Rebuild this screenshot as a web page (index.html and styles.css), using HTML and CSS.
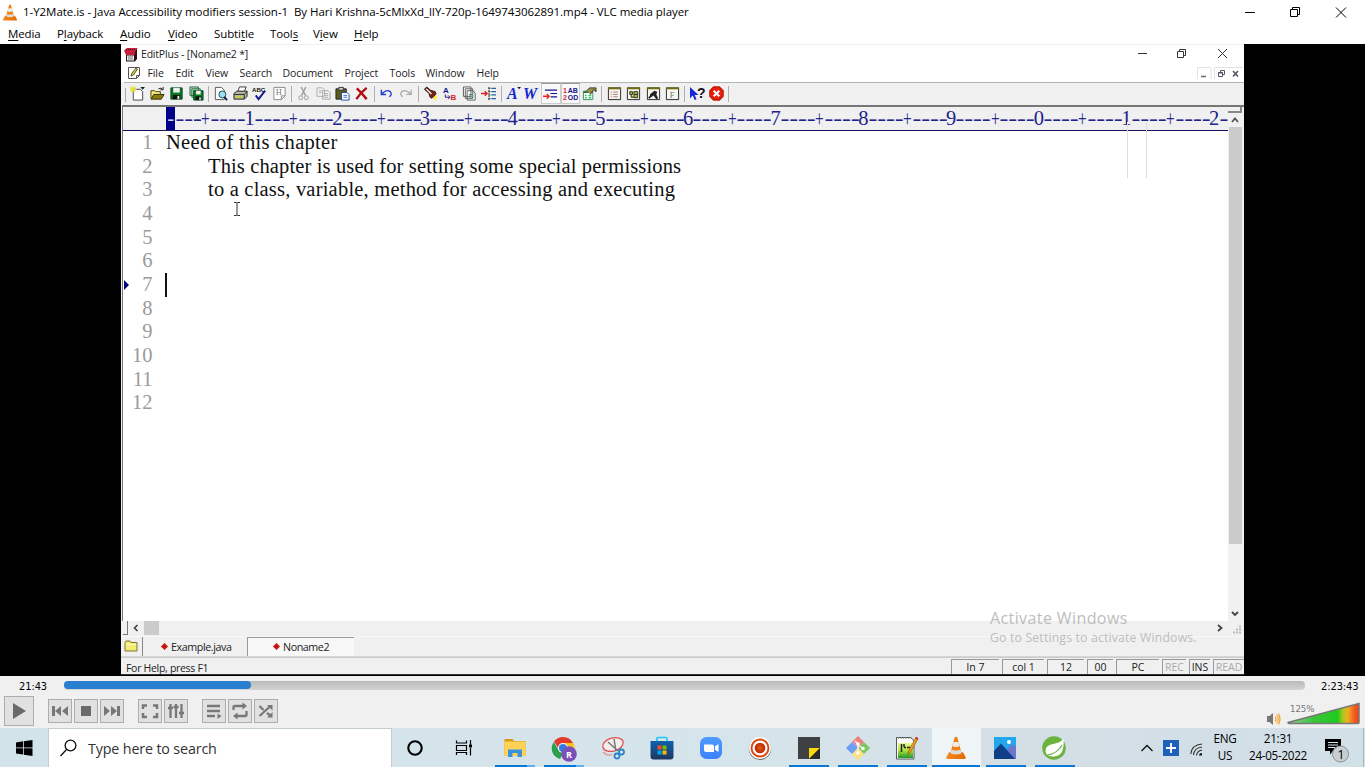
FILE: index.html
```html
<!DOCTYPE html>
<html lang="en">
<head>
<meta charset="utf-8">
<title>VLC media player</title>
<link rel="stylesheet" href="styles.css">
</head>
<body>
<svg class="defs" width="0" height="0">
  <defs>
    <linearGradient id="coneG" x1="0" x2="1"><stop offset="0" stop-color="#f58a1c"/><stop offset="1" stop-color="#e06a00"/></linearGradient>
    <linearGradient id="volG" x1="0" x2="1"><stop offset="0" stop-color="#8fcf8f"/><stop offset=".35" stop-color="#3cc63c"/><stop offset=".7" stop-color="#1ecb1e"/><stop offset=".77" stop-color="#a8c81e"/><stop offset=".84" stop-color="#f0b020"/><stop offset=".93" stop-color="#f06020"/><stop offset="1" stop-color="#f03c1c"/></linearGradient>
    <linearGradient id="bagG" x1="0" y1="0" x2="0" y2="1"><stop offset="0" stop-color="#0d62ae"/><stop offset="1" stop-color="#20365f"/></linearGradient>
    <linearGradient id="zoomG" x1="0" y1="0" x2="0" y2="1"><stop offset="0" stop-color="#4f9bff"/><stop offset="1" stop-color="#3b82fb"/></linearGradient>
    <linearGradient id="npG" x1="0" y1="0" x2="0" y2="1"><stop offset="0" stop-color="#e9f59a"/><stop offset=".5" stop-color="#a8e23c"/><stop offset="1" stop-color="#1f9a2c"/></linearGradient>
    <radialGradient id="recG"><stop offset="0" stop-color="#e85a10"/><stop offset="1" stop-color="#b8260a"/></radialGradient>
    <symbol id="cone" viewBox="0 0 20 24">
      <path d="M3 16.500h14l2.800 5q.5 2-1.200 2H1.400Q-.3 23.500.2 21.500z" fill="url(#coneG)"/>
      <path d="M8.700 1.200Q10 .2 11.300 1.200L16 18.500Q10 21.500 4 18.500z" fill="#f08010"/>
      <path d="M7.600 6h4.900l1.300 4.500q-3.800 1.300-7.500 0z" fill="#ededed"/>
      <path d="M5.300 14q4.700 1.600 9.400 0l1 3.500q-5.700 2.400-11.400 0z" fill="#dcdcdc"/>
    </symbol>
  </defs>
</svg>
<div class="desktop">
  <header class="vlc-title">
    <svg class="vlc-logo" width="14" height="17"><use href="#cone"/></svg>
    <span class="vlc-name">1-Y2Mate.is - Java Accessibility modifiers session-1&nbsp; By Hari Krishna-5cMlxXd_lIY-720p-1649743062891.mp4 - VLC media player</span>
    <svg class="win-btns" width="110" height="20" viewBox="0 0 110 20" fill="none" stroke="#000">
      <path d="M0 10.500h10M45.500 7.500h7v7h-7zM47.500 7v-1.500h7v7h-1.500"/><path d="M91 5.500l10 10M101 5.500l-10 10"/>
    </svg>
  </header>
  <nav class="vlc-menu">
    <span><u>M</u>edia</span><span>P<u>l</u>ayback</span><span><u>A</u>udio</span><span><u>V</u>ideo</span><span>Subti<u>t</u>le</span><span>Tool<u>s</u></span><span>V<u>i</u>ew</span><span><u>H</u>elp</span>
  </nav>

  <main class="video">
    <section class="ep">
      <div class="ep-title">
        <svg width="14" height="15" viewBox="0 0 14 15"><path d="M2 3l2-2h9v11l-2 2.500H2z" fill="#2b1014"/><path d="M0 3.500L3 1h10.500l-2 3-1 4H2z" fill="#c8203c"/><path d="M3 8.500h7v5H3z" fill="#eee"/><path d="M4 10h5M4 12h5" stroke="#777"/><path d="M2 2.500h9" stroke="#4a0c18" stroke-dasharray="1 1"/></svg>
        <span>EditPlus - [Noname2 *]</span>
        <svg class="ep-btns" width="90" height="14" viewBox="0 0 90 14" fill="none" stroke="#333"><path d="M0 6.500h9M39.500 4.500h6v6h-6zM41.500 4V2.500h6v6h-1.500M80 2l9 9M89 2l-9 9"/></svg>
      </div>
      <div class="ep-menu">
        <svg width="14" height="14" viewBox="0 0 14 14"><path d="M1.500 1.500h11v8l-3 3h-8z" fill="#fff" stroke="#555"/><path d="M9.500 12.500v-3h3" fill="none" stroke="#555"/><path d="M4 10l1-3 4-5 1.500 1-4 6z" fill="#d8d020" stroke="#333" stroke-width=".8"/></svg>
        <span>File</span><span>Edit</span><span>View</span><span>Search</span><span>Document</span><span>Project</span><span>Tools</span><span>Window</span><span>Help</span>
        <svg class="mdi-btns" width="46" height="14" viewBox="0 0 46 14" fill="none"><path d="M.5 13V1.500H14V13M17.500 13V1.500H46" stroke="#e2e2e2"/><path d="M4 10.500h5" stroke="#667" stroke-width="1.500"/><path d="M21.500 6.500h4v4h-4zM23.500 6V4.500h4v4H26M21 7h5" stroke="#556"/><path d="M36 5l5 5.500M41 5l-5 5.500" stroke="#556" stroke-width="1.600"/></svg>
      </div>
      <div class="ep-tools">
        <span class="tool"><svg viewBox="0 0 16 16"><path d="M3.500 3.500H11l2.500 2.500v9h-10z" fill="#fff" stroke="#444"/><path d="M0 1l6 5M6 1L0 6M3 0v7M0 3.500h7" stroke="#e8e030" stroke-width="1.200"/><path d="M11 1h5l-2.500 3z" fill="#123"/></svg></span>
        <span class="tool"><svg viewBox="0 0 16 16"><path d="M1 13V5h4l1 1h5v3" fill="#f3e97a" stroke="#443c00"/><path d="M1 14l3-5h11l-3 5z" fill="#8a7b10" stroke="#332c00"/><path d="M9 3q3-2 5 1M14 1v3h-3" fill="none" stroke="#222"/></svg></span>
        <span class="tool"><svg viewBox="0 0 16 16"><path d="M2 2h12v12H2z" fill="#087a1c" stroke="#042"/><path d="M4.500 2h7v5h-7z" fill="#eee"/><path d="M4 9.500h8V14H4z" fill="#111"/><path d="M9 10.500h2V14H9z" fill="#eee"/></svg></span>
        <span class="tool"><svg viewBox="0 0 16 16"><path d="M1 1h9v9H1zM3 3h9v9H3z" fill="#bdb" stroke="#264"/><path d="M5 5h10v10H5z" fill="#087a1c" stroke="#042"/><path d="M7.500 5h5v4h-5z" fill="#eee"/><path d="M7 11h6v4H7z" fill="#111"/><path d="M11 12h1.500v3H11z" fill="#eee"/></svg></span>
        <i class="sep"></i>
        <span class="tool"><svg viewBox="0 0 16 16"><path d="M2.500 1.500H9l3 3v10H2.500z" fill="#fff" stroke="#555"/><circle cx="10" cy="9" r="3.700" fill="#9ae0ee" stroke="#245"/><path d="M12 11.500l3 3.500" stroke="#124" stroke-width="2"/></svg></span>
        <span class="tool"><svg viewBox="0 0 16 16"><path d="M5 6l2-5h7l-2 5z" fill="#fff" stroke="#333"/><path d="M1 8l3-2.500h11V11l-3 3H1z" fill="#b9b9a0" stroke="#222"/><path d="M1 9h11l3-3M12 9v5" fill="none" stroke="#222"/><path d="M3 11.500h7" stroke="#c9d820" stroke-width="1.500"/></svg></span>
        <span class="tool"><svg viewBox="0 0 16 16"><text x="0" y="6" class="abc">ABC</text><path d="M4 10l3 4 7-9" fill="none" stroke="#14148c" stroke-width="2"/></svg></span>
        <span class="tool"><svg viewBox="0 0 16 16"><path d="M2 1.500h12v9l-4 4H2z" fill="#fff" stroke="#888"/><path d="M10 14.500v-4h4" fill="none" stroke="#888"/><text x="4" y="9.500" class="hglyph">H</text></svg></span>
        <i class="sep"></i>
        <span class="tool"><svg viewBox="0 0 16 16" fill="none" stroke="#999"><path d="M5.500 1L10 10M10.500 1L6 10" stroke-width="1.400"/><circle cx="5" cy="12.500" r="2.100"/><circle cx="11" cy="12.500" r="2.100"/></svg></span>
        <span class="tool"><svg viewBox="0 0 16 16" fill="#f4f4f4" stroke="#aaa"><path d="M1 2h6l2 2v7H1zM7 5h6l2 2v7H7z"/><path d="M3 5h3M3 7h3M9 8h4M9 10h4M9 12h4"/></svg></span>
        <span class="tool"><svg viewBox="0 0 16 16"><path d="M1 3h11v11H1z" fill="#5c5a1c" stroke="#222"/><path d="M4 1.500h5v3H4z" fill="#ccc" stroke="#333"/><path d="M7 7h6l2 2v6H7z" fill="#fff" stroke="#114a9c"/><path d="M9 10h4M9 12h4" stroke="#36c"/></svg></span>
        <span class="tool"><svg viewBox="0 0 16 16"><path d="M3 2.500Q8 7 13.500 14M13.500 2Q7 7 2.500 14" fill="none" stroke="#b00c14" stroke-width="2.600"/></svg></span>
        <i class="sep"></i>
        <span class="tool"><svg viewBox="0 0 16 16" fill="none" stroke="#2440d0" stroke-width="1.500"><path d="M2.500 4v5h5M3 8.500Q8 3 12 6q2.500 3-1 5.500"/></svg></span>
        <span class="tool"><svg viewBox="0 0 16 16" fill="none" stroke="#aaa" stroke-width="1.400"><path d="M14 4v5H9M13.500 8.500Q8 3 4 6q-2.500 3 1 5.500"/></svg></span>
        <i class="sep"></i>
        <span class="tool"><svg viewBox="0 0 16 16"><path d="M9 10l7 0-3 6z" fill="#ffe84a"/><path d="M1.500 3.500L4 1l4 3.500 5 1.500 1 2.500-4.500 4.500-2-1-1-4z" fill="#7e2018" stroke="#222"/><path d="M3.500 3l5.500 5.500" stroke="#fff" stroke-width="1.300"/></svg></span>
        <span class="tool"><svg viewBox="0 0 16 16"><text x="1" y="7.500" class="ltr blue">A</text><text x="9" y="15" class="ltr red">B</text><path d="M3.500 9v3H8M6.500 10l2 2-2 2" fill="none" stroke="#14148c"/></svg></span>
        <span class="tool"><svg viewBox="0 0 16 16" fill="#fff" stroke="#555"><path d="M1.500 1h8v10h-8zM3.500 3h8v10h-8zM5.500 5h6l2.500 2.500V15H5.500z"/><path d="M7.500 9h4M7.500 11h4M7.500 13h4" stroke="#486"/></svg></span>
        <span class="tool"><svg viewBox="0 0 16 16" fill="none"><path d="M0 8h6M4 5.500L6.500 8 4 10.500" stroke="#d22" stroke-width="1.500"/><path d="M8.500 1v14M8 2.500h2M8 6h2M8 9.500h2M8 13.500h2" stroke="#222" stroke-dasharray="2 1"/><path d="M11 2.500h5M11 6h5M11 9.500h5M11 13.500h5" stroke="#26a" stroke-width="1.300"/></svg></span>
        <i class="sep"></i>
        <span class="tool narrow"><svg viewBox="0 0 16 16"><text x="1" y="14" class="bigltr">A</text><path d="M12 1h4l-2 2.500z" fill="#114"/></svg></span>
        <span class="tool narrow"><svg viewBox="0 0 16 16"><text x="-1" y="14" class="bigltr">W</text></svg></span>
        <span class="tool on"><svg viewBox="0 0 16 16" fill="none"><path d="M2 4.500h13M8 8h7M8 11.500h7" stroke="#14148c" stroke-width="1.300"/><path d="M0 11h6M4 8.500L6.500 11 4 13.500" stroke="#e22" stroke-width="1.500"/></svg></span>
        <span class="tool on"><svg viewBox="0 0 16 16"><text x="0" y="7.500" class="tiny red">1</text><text x="5" y="7.500" class="tiny blue">AB</text><text x="0" y="15" class="tiny red">2</text><text x="5" y="15" class="tiny blue">OD</text></svg></span>
        <span class="tool"><svg viewBox="0 0 16 16"><path d="M1.500 5.500h10v9h-10z" fill="#fff" stroke="#486"/><path d="M1.500 5.500h10v2h-10z" fill="#365"/><path d="M3 10h2M7 10h3M3 12.500h2M7 12.500h3" stroke="#2c6" stroke-width="1.600"/><path d="M5 5l3-3h7v4l-3-2-3 5" fill="#999340" stroke="#333"/></svg></span>
        <i class="sep"></i>
        <span class="tool"><svg viewBox="0 0 16 16"><path d="M1.500 2h13v12.500h-13z" fill="#f6f6ee" stroke="#222"/><path d="M1 2.500h14" stroke="#706c10" stroke-width="2"/><path d="M4 6.500h1M4 9h1M4 11.500h1" stroke="#d33"/><path d="M6.500 6.500h5M6.500 9h5M6.500 11.500h5" stroke="#a77"/></svg></span>
        <span class="tool"><svg viewBox="0 0 16 16"><path d="M1.500 2h13v12.500h-13z" fill="#f6f6ee" stroke="#222"/><path d="M1 2.500h14" stroke="#706c10" stroke-width="2"/><path d="M4 6h3v3H4zM8.500 6h4v6.500h-4zM8.500 9h4M5.500 9v3h3" fill="#bcb830" stroke="#232"/></svg></span>
        <span class="tool"><svg viewBox="0 0 16 16"><path d="M1.500 2h13v12.500h-13z" fill="#f6f6ee" stroke="#222"/><path d="M1 2.500h14" stroke="#706c10" stroke-width="2"/><path d="M4 9l5-4 3 1-1 3 2 4-2 1-3-4-3 2z" fill="#222"/><path d="M3 13l3-3" stroke="#222" stroke-width="2"/></svg></span>
        <span class="tool"><svg viewBox="0 0 16 16"><path d="M1.500 2h13v12.500h-13z" fill="#f6f6ee" stroke="#222"/><path d="M1 2.500h14" stroke="#706c10" stroke-width="2"/><text x="5" y="13" class="hglyph">F</text></svg></span>
        <i class="sep"></i>
        <span class="tool"><svg viewBox="0 0 16 16"><path d="M0 1v12l3-3 2 5 2-1-2-4.500h4z" fill="#1226e0"/><text x="7.500" y="12.500" class="qm">?</text></svg></span>
        <span class="tool"><svg viewBox="0 0 16 16"><path d="M5 1h6l4 4v6l-4 4H5l-4-4V5z" fill="#e8200c" stroke="#c41404" stroke-width="1.500"/><path d="M5 5l6 6M11 5l-6 6" stroke="#fff" stroke-width="2.200"/></svg></span>
        <i class="sep"></i>
      </div>
      <div class="ep-body">
        <div class="ep-main">
          <div class="ruler"><span class="ruler-block">-</span><i class="lead">---</i><b>+</b><i>----</i><b>1</b><i>----</i><b>+</b><i>----</i><b>2</b><i>----</i><b>+</b><i>----</i><b>3</b><i>----</i><b>+</b><i>----</i><b>4</b><i>----</i><b>+</b><i>----</i><b>5</b><i>----</i><b>+</b><i>----</i><b>6</b><i>----</i><b>+</b><i>----</i><b>7</b><i>----</i><b>+</b><i>----</i><b>8</b><i>----</i><b>+</b><i>----</i><b>9</b><i>----</i><b>+</b><i>----</i><b>0</b><i>----</i><b>+</b><i>----</i><b>1</b><i>----</i><b>+</b><i>----</i><b>2</b><i>-</i></div>
          <div class="code">
            <div class="ln"><em>1</em><p class="l1">Need of this chapter</p></div>
            <div class="ln"><em>2</em><p class="tab l2">This chapter is used for setting some special permissions</p></div>
            <div class="ln"><em>3</em><p class="tab l3">to a class, variable, method for accessing and executing</p></div>
            <div class="ln"><em>4</em></div>
            <div class="ln"><em>5</em></div>
            <div class="ln"><em>6</em></div>
            <div class="ln current"><em>7</em><p class="caret"></p></div>
            <div class="ln"><em>8</em></div>
            <div class="ln"><em>9</em></div>
            <div class="ln"><em>10</em></div>
            <div class="ln"><em>11</em></div>
            <div class="ln"><em>12</em></div>
            <svg class="ibeam" width="8" height="14" viewBox="0 0 8 14" fill="none" stroke="#333"><path d="M1 .5h2.500l.5.500.5-.5H7M4 1v12M1 13.500h2.500l.5-.5.5.5H7"/></svg>
          </div>
        </div>
        <div class="vscroll">
          <div class="splitter"></div>
          <svg width="16" height="14" viewBox="0 0 16 14" fill="none" stroke="#555" stroke-width="1.800"><path d="M4 9l3-3.500L10 9"/></svg>
          <div class="vthumb"></div>
          <svg class="down" width="16" height="14" viewBox="0 0 16 14" fill="none" stroke="#444" stroke-width="1.800"><path d="M4 5l3 3 3-3"/></svg>
        </div>
        <div class="ghost"></div>
      </div>
      <div class="hscroll">
        <i class="hsplit"></i>
        <svg width="16" height="14" viewBox="0 0 16 14" fill="none" stroke="#444" stroke-width="1.700"><path d="M9.500 4l-3 3 3 3"/></svg>
        <i class="hthumb"></i>
        <svg class="right" width="30" height="14" viewBox="0 0 30 14" fill="none" stroke="#444" stroke-width="1.800"><path d="M5 4l3.500 3L5 10"/><path d="M20 11.500h8M23 8.500h5M26 5.500h2" stroke="#bbb" stroke-width="2" stroke-dasharray="2 1"/></svg>
      </div>
      <div class="tabs">
        <span class="folder"><svg width="14" height="12" viewBox="0 0 14 12"><path d="M1 2.500L2 1h4l1 1.500h6V11H1z" fill="#f5ec78" stroke="#7a7630"/><path d="M2 4.500h10" stroke="#fffbc0"/></svg></span>
        <span class="tab1"><i class="dia"></i>Example.java</span>
        <span class="tab2"><i class="dia"></i>Noname2</span>
      </div>
      <div class="status">
        <span class="hint">For Help, press F1</span>
        <span>ln 7</span><span>col 1</span><span>12</span><span>00</span><span>PC</span><span class="off">REC</span><span>INS</span><span class="off">READ</span>
      </div>
      <div class="activate"><div class="a1">Activate Windows</div><div class="a2">Go to Settings to activate Windows.</div></div>
    </section>
  </main>

  <section class="seek">
    <span class="time">21:43</span><div class="track"><div class="played"></div></div><span class="time total">2:23:43</span>
  </section>
  <section class="controls">
    <span class="btn play"><svg width="28" height="28" viewBox="0 0 28 28"><path d="M8 6l13 8-13 8z" fill="#6a6a6a"/></svg></span>
    <span class="btn"><svg viewBox="0 0 22 22"><path d="M3 6h3v10H3zM12 6v10l-6-5zM19 6v10l-6-5z" fill="#777"/></svg></span>
    <span class="btn"><svg viewBox="0 0 22 22"><path d="M6 6h10v10H6z" fill="#6a6a6a"/></svg></span>
    <span class="btn endg"><svg viewBox="0 0 22 22"><path d="M3 6v10l6-5zM10 6v10l6-5zM16 6h3v10h-3z" fill="#777"/></svg></span>
    <span class="btn"><svg viewBox="0 0 22 22" fill="none" stroke="#777" stroke-width="2.500"><path d="M4 9V5.500h4M14 5.500h4V9M4 13v4h4M14 17h4v-4"/></svg></span>
    <span class="btn endg"><svg viewBox="0 0 22 22" fill="none" stroke="#777" stroke-width="2.300"><path d="M5.500 4v14M11 4v14M16.500 4v14M3 8h5M8.500 7h5M14 13h5"/></svg></span>
    <span class="btn"><svg viewBox="0 0 22 22" fill="none" stroke="#777" stroke-width="2.300"><path d="M4 6h13M4 11h13M4 16h8"/><path d="M14.500 13.500l4 2.500-4 3z" fill="#777" stroke="none"/></svg></span>
    <span class="btn"><svg viewBox="0 0 22 22" fill="none" stroke="#777" stroke-width="2.300"><path d="M4.500 10V7Q4.500 6 5.500 6H15M17.500 11v4q0 1-1 1H7"/><path d="M13.500 2.500L18 6l-4.500 3.500zM8.500 12.500L4 16l4.500 3.500z" fill="#777" stroke="none"/></svg></span>
    <span class="btn"><svg viewBox="0 0 22 22" fill="none" stroke="#777" stroke-width="2.300"><path d="M4.500 16L15 6.500M4.500 6l4 4M12 13l4 3"/><path d="M12 5h5.500v5.500zM17.500 12v5.500H12z" fill="#777" stroke="none"/></svg></span>
    <div class="volume">
      <svg class="spk" width="16" height="14" viewBox="0 0 16 14"><path d="M1 4h2.500L7 1v12L3.500 10H1z" fill="#777"/><path d="M9 4.500q2 2.500 0 5M10.500 2.500q3.500 4.500 0 9M12.500 1.500q3 5.500 0 11" fill="none" stroke="#f5a230" stroke-width="1.200"/></svg>
      <div class="vol"><svg width="74" height="23" viewBox="0 0 74 23"><path d="M1 20.500L72 1.500v19q0 1-1 1H2q-1 0-1-1z" fill="url(#volG)" stroke="#777" stroke-width="1.500"/></svg><span>125%</span></div>
    </div>
  </section>

  <footer class="taskbar">
    <span class="start"><svg width="17" height="16" viewBox="0 0 17 16"><path d="M0 2.400L7 1.300v6.200H0zM7.800 1.200L16.500 0v7.500H7.800zM0 8.300h7v6.200l-7-1zM7.800 8.300h8.700V16l-8.700-1.300z"/></svg></span>
    <div class="search"><svg width="18" height="18" viewBox="0 0 18 18" fill="none" stroke="#111" stroke-width="1.300"><circle cx="10.500" cy="6.500" r="5.400"/><path d="M6.500 10.500L.5 17"/></svg><span>Type here to search</span></div>
    <div class="apps">
      <span class="sys"><svg viewBox="0 0 24 24"><circle cx="12" cy="12" r="6.700" fill="none" stroke="#000" stroke-width="2.100"/></svg></span>
      <span class="sys"><svg viewBox="0 0 24 24" fill="none" stroke="#000" stroke-width="1.200"><path d="M4.500 4.500V7h10V4.500M4.500 19v-2.500h10V19M4.500 9.500h10v5h-10zM18.500 4v4.500M18.500 12v7.500"/><path d="M17 8.500h3v3h-3z" fill="#000" stroke="none"/></svg></span>
      <span class="run multi"><svg viewBox="0 0 24 24"><path d="M1.500 3h8l1.500 2h11.500v15h-21z" fill="#d99a10"/><path d="M1.500 5.500h21V20h-21z" fill="#ffd257"/><path d="M5 21v-7.500h14V21h-4.500v-4h-5v4z" fill="#3a93dc"/></svg></span>
      <span class="run multi"><svg class="chrome" viewBox="0 0 26 26"><path d="M12 1a11 11 0 0 1 10 6H12L7 12 3 5.500A11 11 0 0 1 12 1z" fill="#e33b2e"/><path d="M2.700 6L8 15l4 2.500L9 23A11 11 0 0 1 2.700 6z" fill="#2c9f4a"/><path d="M12 7h10.200A11 11 0 0 1 11 23l5-8z" fill="#fbc116"/><circle cx="12" cy="12" r="5" fill="#fff"/><circle cx="12" cy="12" r="4" fill="#2d7de8"/><circle cx="18" cy="18" r="7.800" fill="#7a4fb8"/><text x="15" y="21.500" class="r-ltr">R</text></svg></span>
      <span><svg viewBox="0 0 24 24" fill="none"><ellipse cx="12" cy="8.500" rx="10.500" ry="6.500" transform="rotate(-15 12 8.500)" fill="#f4eeee" stroke="#e05050" stroke-width="1.300"/><path d="M7 6l10 9M13 3l2 12" stroke="#777" stroke-width="1.500"/><circle cx="20.500" cy="16" r="2.500" stroke="#2b86c8" stroke-width="1.800"/><circle cx="16" cy="20" r="2.500" stroke="#2b86c8" stroke-width="1.800"/><path d="M2 16q5 5 9 2" stroke="#e89090" stroke-width="1.200"/></svg></span>
      <span><svg viewBox="0 0 24 24"><path d="M7 6V2.500q0-1 1-1h8q1 0 1 1V6" fill="none" stroke="#26c4f4" stroke-width="1.700"/><path d="M.5 5h23v15.500q0 3-3 3h-17q-3 0-3-3z" fill="url(#bagG)"/><path d="M7.500 9.500h4v4h-4z" fill="#f25022"/><path d="M12.500 9.500h4v4h-4z" fill="#7fba00"/><path d="M7.500 14.500h4v4h-4z" fill="#00a4ef"/><path d="M12.500 14.500h4v4h-4z" fill="#ffb900"/></svg></span>
      <span><svg viewBox="0 0 24 24"><rect x="1" y="1" width="22" height="22" rx="6.500" fill="url(#zoomG)"/><path d="M5 8.500h8q2 0 2 2V16H7q-2 0-2-2zM16 10.500L19.500 8v8L16 13.800z" fill="#fff"/></svg></span>
      <span><svg viewBox="0 0 24 24"><circle cx="12" cy="12.700" r="11.200" fill="#666"/><circle cx="12" cy="12" r="11" fill="#fff"/><circle cx="12" cy="12" r="8.500" fill="#fff" stroke="#d8480e" stroke-width="1.900"/><circle cx="12" cy="12" r="5.300" fill="url(#recG)"/></svg></span>
      <span class="run"><svg viewBox="0 0 24 24"><path d="M1 1h22v22H1z" fill="#3f4042"/><path d="M12 12h11L12 23z" fill="#fcd90a"/><path d="M23 12v11H12z" fill="#2c2c2c"/></svg></span>
      <span class="run"><svg viewBox="0 0 24 24"><path d="M12 0l6 6-6 6-6-6z" fill="#f08080"/><path d="M6 6l6 6-6 6-6-6z" fill="#6ca0f4"/><path d="M18 6l6 6-6 6-6-6z" fill="#7cc85c"/><path d="M12 12l6 6-6 6-6-6z" fill="#fce07c"/><path d="M9 5l3 3v9M12 9l5 3.500" fill="none" stroke="#eee" stroke-width="1.500"/><circle cx="12" cy="8" r="1.800" fill="#fff"/><circle cx="12" cy="17" r="1.800" fill="#fff"/><circle cx="17" cy="12.500" r="1.800" fill="#fff"/></svg></span>
      <span class="run"><svg viewBox="0 0 24 24"><path d="M1.500 1.500h14l3.500 3v18.500H1.500z" fill="#fff" stroke="#555"/><path d="M3 7h15v15H3z" fill="url(#npG)"/><path d="M3 2h14" stroke="#777" stroke-dasharray="1 1.500" stroke-width="1.500"/><path d="M6.500 8v8M9 11.500h2M12 11.500h3M9 8v3" stroke="#222" stroke-width="1.500"/><path d="M21 1.500l2 1.500-7.500 13-2.500 3 .5-4z" fill="#f0a020" stroke="#8a4a00" stroke-width=".6"/><path d="M20.500 1.500l2.500 1.500" stroke="#d23" stroke-width="2"/></svg></span>
      <span class="run active"><svg viewBox="0 0 24 24"><use href="#cone" x="2" y="0" width="20" height="23.500"/></svg></span>
      <span class="run"><svg viewBox="0 0 24 24"><path d="M1 1h22v22H1z" fill="#22a7ec"/><path d="M12 16l7-8 4 3v12H12z" fill="#6a78cc"/><path d="M1 15l7-7.500L22 23H1z" fill="#103f88"/><circle cx="16" cy="6" r="2" fill="#fff"/></svg></span>
      <span class="run"><svg viewBox="0 0 24 24"><circle cx="12" cy="12" r="11.800" fill="#6cb33e"/><path d="M21.500 3Q23 20 12 20.500q-5 .5-7.500-2Q1 11 9 8.500 18 7 21.500 3z" fill="#fff"/><path d="M5 19Q15 18 20 9" fill="none" stroke="#6cb33e" stroke-width="1.200"/></svg></span>
    </div>
    <div class="tray">
      <svg width="12" height="8" viewBox="0 0 12 8" fill="none" stroke="#111" stroke-width="1.300"><path d="M.5 7L6 1.500 11.500 7"/></svg>
      <svg class="plus" width="16" height="16" viewBox="0 0 16 16"><path d="M0 0h16v16H0z" fill="#1d62b8"/><path d="M3 8h10M8 3v10" stroke="#fff" stroke-width="1.800"/></svg>
      <svg class="wifi" width="13" height="13" viewBox="0 0 13 13" fill="none" stroke="#333"><path d="M.8 11Q1.500 2 12 1M3.500 12Q4 5 12 4M6.500 12.500Q7 8 12 7" stroke-width="1.100"/><path d="M9 12.500q0-2.500 3-2.500v2.500z" fill="#111" stroke="none"/></svg>
      <div class="lang"><span>ENG</span><span>US</span></div>
      <div class="clock"><span>21:31</span><span class="date">24-05-2022</span></div>
      <div class="notify"><svg width="26" height="26" viewBox="0 0 26 26"><path d="M1 2h16v12H9l-3 3.500V14H1z"/><path d="M4 5.500h10M4 8h10M4 10.500h7" stroke="#d5e4ea"/><circle cx="16.500" cy="17" r="8" fill="#c7cfd3" stroke="#8b9498"/><text x="13.200" y="22" class="one">1</text></svg></div>
    </div>
  </footer>
</div>
</body>
</html>
```
FILE: styles.css
```css
* { box-sizing: border-box; }
body { margin: 0; background: #fff; font: 11.5px "Open Sans", "Noto Sans", sans-serif; color: #000; overflow: hidden; }
svg { display: block; flex: none; }
.defs { position: absolute; }
i, em { font-style: normal; }
.desktop { width: 1365px; height: 767px; display: flex; flex-direction: column; white-space: nowrap; }
.vlc-title { height: 24px; display: flex; align-items: center; padding-left: 3px; }
.vlc-name { margin-left: 6px; letter-spacing: -.045px; padding-bottom: 2px; }
.win-btns { margin-left: auto; margin-right: 10px; }
.vlc-menu { height: 20px; display: grid; grid-template-columns: 49px 63px 48px 46px 56px 43px 41px 1fr; align-items: center; padding: 0 0 2px 8px; letter-spacing: -.1px; }
.vlc-menu u { text-underline-offset: 2px; }

.video { height: 632px; background: #000; padding-left: 121px; }
.ep { width: 1123px; height: 631px; position: relative; background: #f0f0f0; color: #222; display: flex; flex-direction: column; border-bottom: 1px solid #333; font-size: 10.5px; }
.ep-title { height: 20px; background: #fff; border-top: 1px solid #eee; display: flex; align-items: center; padding-left: 3px; gap: 3px; letter-spacing: -.2px; }
.ep-btns { margin-left: auto; margin-right: 16px; }
.ep-menu { height: 18px; background: #fff; display: grid; grid-template-columns: 20.500px 28px 30px 34px 43px 62px 45px 36px 51px 1fr auto; align-items: center; padding-left: 6px; letter-spacing: -.1px; }
.mdi-btns { grid-column: 11; margin-right: 1px; }
.ep-tools { height: 23px; border-top: 1px solid #b5b5b5; display: flex; align-items: center; margin-left: 3px; padding-left: 3px; background: linear-gradient(90deg, #aaa 1px, transparent 1px) 1px 5px / 1px 14px no-repeat; }
.tool { width: 19.400px; height: 21px; display: grid; place-items: center; flex: none; }
.tool:first-child { margin-left: 1.300px; }
.tool.narrow { width: 18.700px; }
.tool svg { width: 15px; height: 15px; }
.tool.on { background: #f9f9f9; border: 1px solid #ccc; border-top-color: #999; }
.sep { width: 1px; height: 16px; background: #b0b0b0; margin: 0 2.150px; flex: none; }
.abc { font: bold 6.500px "Liberation Sans", sans-serif; fill: #111; }
.hglyph { font: 9px "Liberation Serif", serif; fill: #777; }
.ltr { font: bold 8.500px "Liberation Sans", sans-serif; }
.tiny { font: bold 7.500px "Liberation Sans", sans-serif; }
.blue { fill: #14148c; }
.red { fill: #d81c24; }
.bigltr { font: italic bold 17px "Liberation Serif", serif; fill: #1428cc; }
.qm { font: bold 15px "Liberation Sans", sans-serif; fill: #112; }

.ep-body { height: 517px; position: relative; display: flex; border-top: 2px solid #777; margin-left: 1px; }
.ep-main { width: 1106px; border-left: 1px solid #777; background: #fff; }
.ruler { height: 24px; background: #f0f0f0; border-bottom: 1px solid #12125c; padding-left: 43.300px; display: flex; font: 20.500px/23px "Liberation Serif", serif; color: #22228c; overflow: hidden; }
.ruler i { width: 35.092px; letter-spacing: -.078px; padding-left: .4px; flex: none; transform: scaleX(1.3); transform-origin: 0 0; }
.ruler .lead { width: 26.319px; }
.ruler b { width: 8.773px; flex: none; font-weight: normal; display: flex; justify-content: center; }
.ruler b:nth-of-type(odd) { transform: scale(.75, 1.100); }
.ruler i:last-child { width: 8.773px; }
.ruler-block { width: 8.773px; background: #00008b; color: #ccd; flex: none; padding-left: 1px; }
.code { position: relative; font: 20.500px/23.700px "Liberation Serif", serif; color: #111; }
.ln { height: 23.700px; display: flex; position: relative; }
.ln em { width: 29.500px; text-align: right; color: #9a9a9a; }
.ln p { margin: 0 0 0 13.500px; }
.ln .tab { margin-left: 55.500px; }
.l1 { letter-spacing: .3px; }
.l2 { letter-spacing: .13px; }
.l3 { letter-spacing: .21px; }
.current::before { content: ""; position: absolute; left: 1px; top: 7px; border: 5px solid transparent; border-left-color: #00007a; border-right: 0; }
.ln .caret { width: 2px; background: #111; margin-left: 12.500px; }
.ibeam { position: absolute; left: 110px; top: 71px; }
.vscroll { width: 16px; display: flex; flex-direction: column; background: #f1f1f1; }
.splitter { height: 6px; width: 14px; border: solid #888; border-width: 0 2px 2px 0; flex: none; }
.vthumb { width: 13px; margin-left: 1px; height: 417px; background: #cbcbcb; }
.down { margin-top: auto; }
.ghost { position: absolute; left: 1005px; top: 15px; width: 20px; height: 56px; border: solid #ddd; border-width: 0 1px; }
.hscroll { height: 15px; display: flex; padding-left: 2px; }
.hsplit { width: 5px; height: 14px; border: solid #777; border-width: 0 1.500px 1.500px 0; }
.hthumb { width: 15px; height: 14px; background: #cbcbcb; }
.right { margin-left: auto; margin-right: 1px; }
.tabs { height: 21px; display: flex; border-top: 1px solid #f8f8f8; border-bottom: 1px solid #d5d5d5; font-size: 10.700px; letter-spacing: -.4px; }
.folder { width: 22px; padding: 3px 0 0 3px; border-right: 1px solid #888; }
.tab1, .tab2 { display: flex; align-items: center; gap: 4px; width: 104px; padding-left: 19px; }
.tab2 { width: 107px; padding: 0 0 1px 26px; border: solid #999; border-width: 1px 0 0 1px; background: #f8f8f8; }
.dia { width: 5px; height: 5px; background: #c8140c; transform: rotate(45deg); }
.status { height: 17px; display: flex; gap: 3px; padding-top: 1px; border-top: 1px solid #ccc; font-size: 10.500px; }
.status span { border: solid #999; border-width: 1px 0 0 1px; text-align: center; flex: none; line-height: 15px; }
.status .hint { border: 0; width: 827px; text-align: left; padding: 2px 0 0 5px; letter-spacing: -.3px; }
.status span:nth-child(2) { width: 48px; }
.status span:nth-child(3) { width: 42px; }
.status span:nth-child(4) { width: 37px; }
.status span:nth-child(5) { width: 26px; }
.status span:nth-child(6) { width: 43px; }
.status span:nth-child(7) { width: 24px; }
.status span:nth-child(8) { width: 21px; }
.status span:nth-child(9) { width: 31px; }
.status .off { color: #aaa; }
.activate { position: absolute; left: 869px; top: 564px; color: #bdbdbd; }
.a1 { font-size: 16px; line-height: 21px; letter-spacing: .4px; }
.a2 { font-size: 12.300px; line-height: 18px; letter-spacing: .15px; }

.seek { height: 18px; background: #f0f0f0; display: flex; align-items: center; font: 11px "DejaVu Sans Condensed", "DejaVu Sans", sans-serif; }
.time { width: 64px; padding: 2px 0 0 19px; letter-spacing: -.1px; }
.total { padding-left: 16px; width: 60px; }
.track { width: 1241px; height: 9px; border-radius: 4px; background: linear-gradient(#b9b9b9, #d4d4d4); }
.played { width: 15.050%; height: 8px; border-radius: 4px; background: #2a7fd0; }
.controls { height: 34px; background: #f0f0f0; display: flex; align-items: center; padding: 0 4px; gap: 2px; }
.btn { width: 24px; height: 24px; border: 1px solid #adadad; background: #e1e1e1; }
.btn svg { width: 22px; height: 22px; }
.play { width: 30px; height: 30px; margin-right: 12px; }
.play svg { width: 28px; height: 28px; }
.endg { margin-right: 12px; }
.volume { margin-left: auto; display: flex; align-items: flex-end; align-self: flex-end; padding-bottom: 3px; gap: 5px; }
.spk { margin-bottom: -1px; }
.vol { position: relative; }
.vol span { position: absolute; left: 3px; top: 1px; font: 9.500px/12px "DejaVu Sans Condensed", sans-serif; color: #777; }

.taskbar { height: 39px; background: linear-gradient(90deg, #d3e3ea, #d6e5eb 55%, #d4dee5 75%, #d2e0e8); display: flex; }
.start { width: 48px; padding: 12px 0 0 16px; }
.search { width: 344px; background: #fff; border: 1px solid #c4cdd1; border-bottom: 0; display: flex; align-items: center; gap: 10px; padding-left: 11px; font-size: 14.300px; color: #333; }
.search span { letter-spacing: -.15px; }
.apps { display: flex; }
.apps > span { width: 49.050px; height: 39px; padding-top: 8px; display: flex; flex-direction: column; align-items: center; position: relative; }
.apps > span > svg { width: 24px; height: 24px; }
.apps > .sys { padding-right: 3px; }
.apps .chrome { width: 26px; height: 26px; }
.run::after { content: ""; position: absolute; left: 5px; bottom: 0; width: 40px; height: 2px; background: #0a78d7; }
.multi::after { background: linear-gradient(90deg, #0a78d7 80%, #62b0ee 80%); }
.active { background: #eff4f7; }
.active::after { left: 0; width: 48px; }
.r-ltr { font: bold 9px "Open Sans", sans-serif; fill: #fff; }
.tray { margin-left: auto; display: flex; align-items: center; font-size: 11.700px; }
.plus { margin-left: 10px; }
.wifi { margin: 4px 9px 0 11px; }
.lang, .clock { display: flex; flex-direction: column; align-items: center; line-height: 17px; width: 26px; letter-spacing: -.3px; padding-bottom: 1px; }
.clock { width: 60px; margin-left: 10px; }
.notify { width: 56px; padding: 9px 0 0 16px; border-right: 1px solid #a9b6bc; margin-right: 1px; height: 39px; }
.one { font: 13px "Open Sans", sans-serif; }
```
